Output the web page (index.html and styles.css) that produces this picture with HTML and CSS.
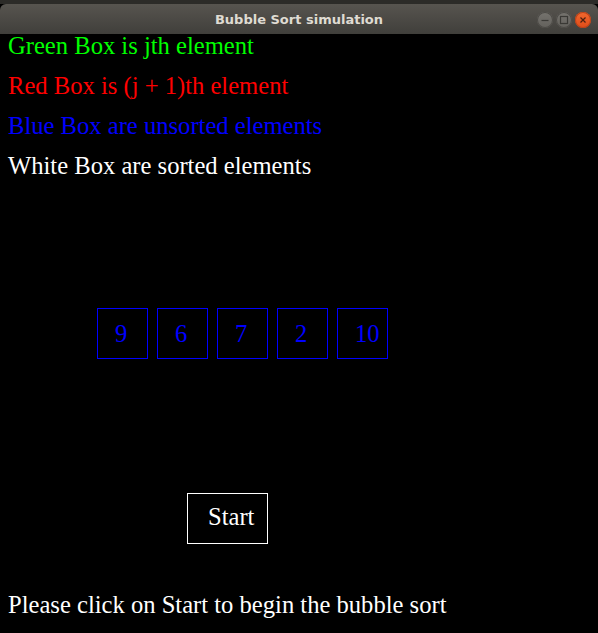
FILE: index.html
```html
<!DOCTYPE html>
<html>
<head>
<meta charset="utf-8">
<link rel="stylesheet" href="styles.css">
</head>
<body>
<div class="behind"></div>
<header class="titlebar">
  <span class="title">Bubble Sort simulation</span>
  <div class="controls">
    <span class="btn"><svg width="16" height="16" viewBox="0 0 16 16"><line x1="4.5" y1="8.5" x2="11.5" y2="8.5" stroke="#3a3935" stroke-width="1.2"/></svg></span>
    <span class="btn"><svg width="16" height="16" viewBox="0 0 16 16"><rect x="4.5" y="4.5" width="7" height="7" fill="none" stroke="#3a3935" stroke-width="1.2"/></svg></span>
    <span class="btn close"><svg width="16" height="16" viewBox="0 0 16 16"><path d="M5.5 5.5 L10.5 10.5 M10.5 5.5 L5.5 10.5" stroke="#4a2010" stroke-width="1.2"/></svg></span>
  </div>
</header>
<main class="canvas">
  <div class="legend">
    <div class="line green">Green Box is jth element</div>
    <div class="line red">Red Box is (j + 1)th element</div>
    <div class="line blue">Blue Box are unsorted elements</div>
    <div class="line white">White Box are sorted elements</div>
  </div>
  <div class="row">
    <div class="box">9</div>
    <div class="box">6</div>
    <div class="box">7</div>
    <div class="box">2</div>
    <div class="box">10</div>
  </div>
  <div class="start">Start</div>
  <div class="line white status">Please click on Start to begin the bubble sort</div>
</main>
</body>
</html>
```
FILE: styles.css
```css
html, body {
  margin: 0;
  padding: 0;
  background: #000;
  width: 598px;
  height: 633px;
  overflow: hidden;
}
.behind {
  height: 4px;
  background: #2c2b28;
}
.titlebar {
  height: 30px;
  background: linear-gradient(#57544f, #403f3b);
  border-radius: 6px 6px 0 0;
  display: flex;
  align-items: center;
  justify-content: center;
  position: relative;
}
.title {
  font-family: "DejaVu Sans", sans-serif;
  font-weight: bold;
  font-size: 13px;
  color: #dfdbd2;
  margin-left: 0;
}
.controls {
  position: absolute;
  right: 7px;
  top: 8px;
  display: flex;
  gap: 3px;
}
.btn {
  width: 16px;
  height: 16px;
  border-radius: 50%;
  background: linear-gradient(#75736e, #63615c);
  box-shadow: inset 0 0 0 1px #4c4a46;
  display: block;
}
.btn svg { display: block; }
.btn.close {
  background: linear-gradient(#f0682f, #df4c19);
  box-shadow: inset 0 0 0 1px #b8421a;
}
.canvas {
  padding-left: 8px;
  font-family: "Liberation Serif", "Times New Roman", serif;
  font-size: 24.6px;
}
.legend {
  display: flex;
  flex-direction: column;
  gap: 16px;
}
.line {
  line-height: 24px;
  height: 24px;
  white-space: nowrap;
}
.green { color: #00ff00; }
.red { color: #ff0000; }
.blue { color: #0000ff; }
.white { color: #ffffff; }
.row {
  display: flex;
  gap: 9px;
  margin-top: 130px;
  margin-left: 89px;
}
.box {
  box-sizing: border-box;
  width: 51px;
  height: 51px;
  border: 1px solid #0000ff;
  color: #0000ff;
  padding-left: 17px;
  line-height: 49px;
}
.start {
  box-sizing: border-box;
  width: 81px;
  height: 51px;
  margin-top: 134px;
  margin-left: 179px;
  border: 1px solid #ffffff;
  color: #ffffff;
  padding-left: 20px;
  line-height: 45px;
}
.status {
  margin-top: 49px;
}
```
